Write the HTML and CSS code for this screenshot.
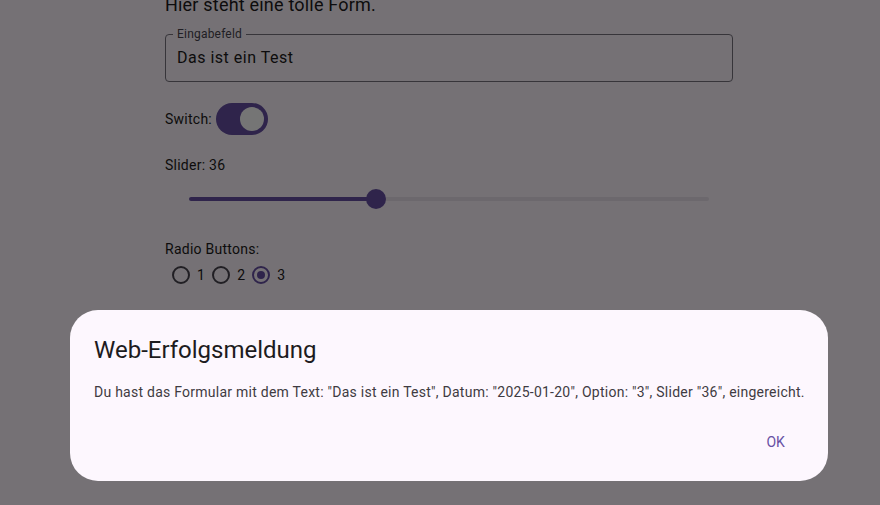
FILE: index.html
```html
<!DOCTYPE html>
<html lang="de">
<head>
<meta charset="utf-8">
<title>Form</title>
<link rel="stylesheet" href="styles.css">
</head>
<body>
<main class="form">
  <h1 class="form-title">Hier steht eine tolle Form.</h1>
  <div class="field">
    <span class="field-label">Eingabefeld</span>
    <span class="field-value">Das ist ein Test</span>
  </div>
  <div class="switch-row">
    <span class="text">Switch:</span>
    <span class="switch"><span class="switch-thumb"></span></span>
  </div>
  <div class="text slider-label">Slider: 36</div>
  <div class="slider">
    <div class="slider-active" style="width: 36%"></div>
    <div class="slider-thumb"></div>
    <div class="slider-inactive"></div>
  </div>
  <div class="text radio-label">Radio Buttons:</div>
  <div class="radio-row">
    <span class="radio"><span class="radio-circle"></span></span><span class="text">1</span>
    <span class="radio"><span class="radio-circle"></span></span><span class="text">2</span>
    <span class="radio"><span class="radio-circle checked"></span></span><span class="text">3</span>
  </div>
</main>
<div class="scrim">
  <section class="dialog">
    <h2 class="dialog-title">Web-Erfolgsmeldung</h2>
    <p class="dialog-body">Du hast das Formular mit dem Text: "Das ist ein Test", Datum: "2025-01-20", Option: "3", Slider "36", eingereicht.</p>
    <div class="dialog-actions"><button class="text-button">OK</button></div>
  </section>
</div>
</body>
</html>
```
FILE: styles.css
```css
* { box-sizing: border-box; }
html, body {
  margin: 0;
  padding: 0;
  background: #fef7ff;
  font-family: Roboto, "Liberation Sans", sans-serif;
  color: #1d1b20;
  overflow: hidden;
  height: 100%;
}
.form {
  margin-left: 165px;
  width: 568px;
  display: flex;
  flex-direction: column;
}
.form-title {
  margin: -7px 0 0 0;
  font-size: 18px;
  font-weight: 400;
  line-height: 24px;
  letter-spacing: 0.2px;
}
.text {
  font-size: 14px;
  line-height: 20px;
  letter-spacing: 0.25px;
}
.field {
  position: relative;
  margin-top: 17px;
  height: 48px;
  border: 1px solid #79747e;
  border-radius: 4px;
  display: flex;
  align-items: center;
  padding-left: 11px;
}
.field-label {
  position: absolute;
  top: -9px;
  left: 7px;
  padding: 0 4px;
  background: #fef7ff;
  font-size: 12px;
  line-height: 16px;
  color: #49454f;
  letter-spacing: 0.2px;
}
.field-value {
  font-size: 16px;
  line-height: 24px;
  letter-spacing: 0.5px;
}
.switch-row {
  margin-top: 21px;
  display: flex;
  align-items: center;
  gap: 4px;
  height: 32px;
}
.switch {
  width: 52px;
  height: 32px;
  border-radius: 16px;
  background: #6750a4;
  display: flex;
  align-items: center;
  justify-content: flex-end;
  padding-right: 4px;
}
.switch-thumb {
  width: 24px;
  height: 24px;
  border-radius: 50%;
  background: #ffffff;
}
.slider-label {
  margin-top: 20px;
}
.slider {
  margin: 10px 24px 0 24px;
  height: 28px;
  display: flex;
  align-items: center;
}
.slider-active {
  height: 4px;
  background: #6750a4;
  border-radius: 2px 0 0 2px;
}
.slider-thumb {
  width: 20px;
  height: 20px;
  border-radius: 50%;
  background: #6750a4;
  margin: 0 -10px;
  position: relative;
}
.slider-inactive {
  flex: 1;
  height: 4px;
  background: #ebe2ee;
  border-radius: 0 2px 2px 0;
}
.radio-label {
  margin-top: 26px;
}
.radio-row {
  display: flex;
  align-items: center;
  height: 32px;
}
.radio {
  width: 32px;
  height: 32px;
  display: flex;
  align-items: center;
  justify-content: center;
}
.radio-circle {
  width: 18px;
  height: 18px;
  border-radius: 50%;
  border: 2px solid #49454f;
  display: flex;
  align-items: center;
  justify-content: center;
}
.radio-circle.checked {
  border-color: #6750a4;
}
.radio-circle.checked::after {
  content: "";
  width: 8px;
  height: 8px;
  border-radius: 50%;
  background: #6750a4;
}
.scrim {
  position: fixed;
  inset: 0;
  z-index: 10;
  background: rgba(0, 0, 0, 0.54);
  padding: 310px 0 0 70px;
}
.dialog {
  width: 758px;
  height: 171px;
  background: #fdf7fe;
  border-radius: 28px;
  padding: 24px 24px 0 24px;
  display: flex;
  flex-direction: column;
}
.dialog-title {
  margin: 0;
  font-size: 24px;
  font-weight: 400;
  line-height: 32px;
  color: #1d1b20;
}
.dialog-body {
  margin: 16px 0 0 0;
  font-size: 14px;
  line-height: 20px;
  letter-spacing: 0.25px;
  white-space: nowrap;
  color: #3f3b42;
}
.dialog-actions {
  display: flex;
  justify-content: flex-end;
  margin-top: 20px;
}
.text-button {
  border: none;
  background: transparent;
  height: 40px;
  padding: 0 19px 0 12px;
  font-family: Roboto, "Liberation Sans", sans-serif;
  font-size: 14px;
  font-weight: 400;
  letter-spacing: 0.1px;
  color: #6750a4;
}
```
